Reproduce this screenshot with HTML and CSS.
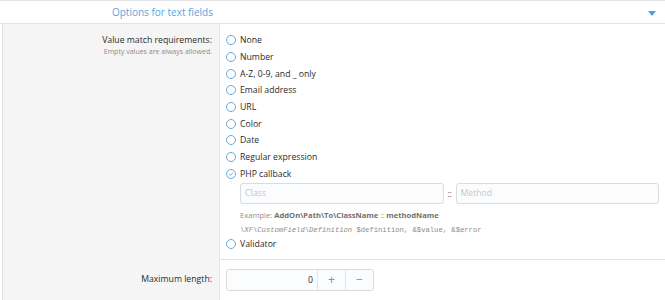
FILE: index.html
```html
<!DOCTYPE html>
<html>
<head>
<meta charset="utf-8">
<link rel="stylesheet" href="styles.css">
</head>
<body>
<div class="block">
  <div class="header">
    <span class="header-title">Options for text fields</span>
    <svg class="caret" width="8" height="5" viewBox="0 0 8 5"><path d="M0 0 H8 L4 5 Z" fill="#4d9fd9"/></svg>
  </div>
  <div class="row">
    <div class="label-col">
      <div class="label">Value match requirements:</div>
      <div class="hint">Empty values are always allowed.</div>
    </div>
    <div class="input-col">
      <ul class="choices">
        <li class="choice"><span class="radio"></span><span>None</span></li>
        <li class="choice"><span class="radio"></span><span>Number</span></li>
        <li class="choice"><span class="radio"></span><span>A-Z, 0-9, and _ only</span></li>
        <li class="choice"><span class="radio"></span><span>Email address</span></li>
        <li class="choice"><span class="radio"></span><span>URL</span></li>
        <li class="choice"><span class="radio"></span><span>Color</span></li>
        <li class="choice"><span class="radio"></span><span>Date</span></li>
        <li class="choice"><span class="radio"></span><span>Regular expression</span></li>
        <li class="choice"><span class="radio checked"><svg width="10" height="10" viewBox="0 0 10 10"><path d="M2.6 5.1 L4.3 6.7 L7.4 3.5" fill="none" stroke="#5aa2d8" stroke-width="1.1"/></svg></span><span>PHP callback</span></li>
        <li class="sub">
          <div class="callback">
            <div class="text-input placeholder">Class</div>
            <span class="sep">::</span>
            <div class="text-input placeholder">Method</div>
          </div>
          <div class="example">Example: <b>AddOn\Path\To\ClassName</b> :: <b>methodName</b></div>
          <div class="code"><i>\XF\CustomField\Definition</i> $definition, &amp;$value, &amp;$error</div>
        </li>
        <li class="choice"><span class="radio"></span><span>Validator</span></li>
      </ul>
    </div>
  </div>
  <div class="row row-sep">
    <div class="label-col label-col-2">
      <div class="label">Maximum length:</div>
    </div>
    <div class="input-col input-col-2">
      <div class="number-box">
        <div class="number-value">0</div>
        <div class="num-btn">+</div>
        <div class="num-btn">&minus;</div>
      </div>
    </div>
  </div>
</div>
</body>
</html>
```
FILE: styles.css
```css
* { box-sizing: border-box; }
html, body { margin: 0; padding: 0; background: #fff; }
body {
  font-family: "Open Sans", "Noto Sans", sans-serif;
  font-size: 8.7px;
  color: #2b2b2b;
  width: 665px;
  height: 300px;
  overflow: hidden;
}
.block {
  border-top: 1px solid #e3e3e3;
}
.header {
  height: 23px;
  display: flex;
  align-items: center;
  border-bottom: 1px solid #e3e3e3;
  position: relative;
}
.header-title {
  width: 213px;
  text-align: right;
  color: #5aa5dc;
  font-size: 10px;
}
.caret {
  position: absolute;
  right: 9px;
  top: 10px;
}
.row {
  display: flex;
}
.label-col {
  width: 218px;
  flex: none;
  background: #f5f5f5;
  border-left: 1px solid #e3e3e3;
  margin-left: 2px;
  border-right: 1px solid #e6e6e6;
  text-align: right;
  padding: 9px 7px 0 0;
}
.label { line-height: 14px; }
.hint {
  font-size: 7px;
  color: #8c8c8c;
  line-height: 10px;
}
.input-col {
  flex: 1;
  padding: 8px 6px 6px 6px;
}
.choices { list-style: none; margin: 0; padding: 0; }
.choice {
  display: flex;
  align-items: center;
  height: 16.67px;
}
.radio {
  width: 10px;
  height: 10px;
  border: 1px solid #6aaadb;
  border-radius: 50%;
  margin-right: 4px;
  display: inline-flex;
  align-items: center;
  justify-content: center;
  flex: none;
}
.radio svg { display: block; }
.sub {
  padding-left: 14px;
  padding-top: 1px;
}
.callback {
  display: flex;
  align-items: center;
}
.text-input {
  flex: 1;
  height: 21px;
  border: 1px solid #dcdcdc;
  border-radius: 3px;
  background: #fafcfe;
  padding: 0 4px;
  line-height: 19px;
}
.placeholder { color: #c3c8ce; }
.sep {
  width: 12px;
  text-align: center;
  color: #555;
  font-size: 9px;
}
.example {
  font-size: 7.6px;
  color: #8c8c8c;
  margin-top: 5px;
  line-height: 12px;
}
.example b { color: #707070; font-weight: 700; }
.code {
  font-family: "Liberation Mono", "DejaVu Sans Mono", monospace;
  font-size: 7.2px;
  color: #8c8c8c;
  margin-top: 3px;
  line-height: 12px;
}
.row-sep .input-col-2 {
  border-top: 1px solid #e3e3e3;
  padding: 9px 6px 10px 6px;
}
.label-col-2 {
  padding-top: 13px;
}
.number-box {
  display: flex;
  width: 148px;
  height: 22px;
  border: 1px solid #dcdcdc;
  border-radius: 3px;
  background: #fafcfe;
}
.number-value {
  flex: 1;
  text-align: right;
  padding-right: 4px;
  line-height: 20px;
}
.num-btn {
  width: 28px;
  border-left: 1px solid #e3e3e3;
  color: #4d9fd9;
  text-align: center;
  line-height: 19px;
  font-size: 12px;
}
```
